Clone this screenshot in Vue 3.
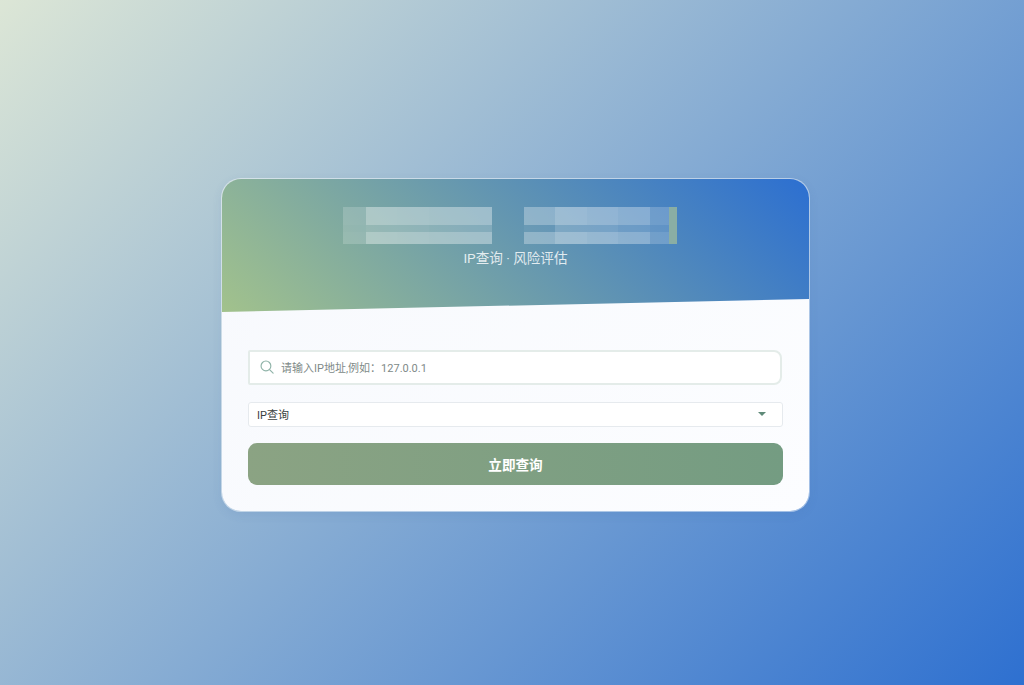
<script setup>
const alphaTop = { m1: 0.18, m2: 0.39, m3: 0.38, m4: 0.37, m5: 0.37, m6: 0.3, m7: 0.4, m8: 0.37, m9: 0.33, m10: 0.2 }
const alphaMid = { m1: 0.16, m2: 0.2, m3: 0.2, m4: 0.18, m5: 0.18, m6: 0.05, m7: 0.2, m8: 0.2, m9: 0.16, m10: 0.12 }
const names = ['m1', 'm2', 'm3', 'm4', 'm5', 'sp', 'm6', 'm7', 'm8', 'm9', 'm10', 'm11']
const rows = [
  { cls: 'band-a', alpha: alphaTop },
  { cls: 'band-b', alpha: alphaMid },
  { cls: 'band-c', alpha: alphaTop }
]
const tint = (a) => (a ? { background: `rgba(255,255,255,${a})` } : null)
</script>

<template>
  <main class="page">
    <section class="card">
      <header class="head">
        <div class="mosaic">
          <div v-for="row in rows" :key="row.cls" class="band" :class="row.cls">
            <span v-for="n in names" :key="n" class="cell" :class="n" :style="tint(row.alpha[n])"></span>
          </div>
        </div>
        <p class="sub">IP查询 · 风险评估</p>
      </header>
      <form class="body" @submit.prevent>
        <label class="search">
          <svg class="ico" width="14" height="14" viewBox="0 0 16 16" fill="none" stroke="#8fb3a8" stroke-width="1.3" stroke-linecap="round">
            <circle cx="6.8" cy="6.8" r="5.6" />
            <path d="M10.9 10.9 15 15" />
          </svg>
          <span class="ph">请输入IP地址,例如：127.0.0.1</span>
        </label>
        <div class="select">
          <span>IP查询</span>
          <i class="caret"></i>
        </div>
        <button class="go" type="button">立即查询</button>
      </form>
    </section>
  </main>
</template>

<style scoped>
.page {
  box-sizing: border-box;
  height: 685px;
  padding: 178px 0 0 221px;
  background: linear-gradient(135deg, #dce6d6 0%, #2e70d0 100%);
  font-family: Roboto, "Noto Sans CJK SC", sans-serif;
  overflow: hidden;
}
.card {
  box-sizing: border-box;
  width: 589px;
  height: 334px;
  border: 1px solid rgba(255, 255, 255, 0.45);
  border-radius: 20px;
  overflow: hidden;
  background: linear-gradient(135deg, #f7f9fd, #fcfdff) padding-box;
  box-shadow: 0 3px 10px rgba(60, 100, 170, 0.1);
}
.head {
  box-sizing: border-box;
  height: 133px;
  padding-top: 28px;
  background: linear-gradient(45deg, #a2c28c 0%, #2c6fd1 100%);
  clip-path: polygon(0 0, 100% 0, 100% 90.2%, 0 100%);
  text-align: center;
}
.mosaic {
  width: 335px;
  margin-left: 121px;
}
.band {
  display: flex;
}
.band-a { height: 18px; }
.band-b { height: 7px; }
.band-c { height: 12px; }
.cell { display: block; flex: none; }
.m1 { width: 23px; }
.m2 { width: 31px; }
.m3 { width: 32px; }
.m4 { width: 32px; }
.m5 { width: 31px; }
.sp { width: 32px; }
.m6 { width: 31px; }
.m7 { width: 32px; }
.m8 { width: 31px; }
.m9 { width: 32px; }
.m10 { width: 19px; }
.m11 { width: 8px; background: #8aaea4; }
.sub {
  margin: 4px 0 0;
  font-size: 13.6px;
  line-height: 20px;
  color: rgba(255, 255, 255, 0.82);
}
.body {
  display: flex;
  flex-direction: column;
  width: 535px;
  margin: 38px 0 0 26px;
}
.search {
  box-sizing: border-box;
  display: flex;
  align-items: center;
  gap: 7px;
  width: 534px;
  height: 35px;
  padding: 0 0 1px 10px;
  border: 2px solid #e4ece9;
  border-radius: 2px 8px 8px 2px;
  background: #fff;
}
.ico { flex: none; }
.ph {
  font-size: 11px;
  color: #808a88;
}
.select {
  box-sizing: border-box;
  display: flex;
  align-items: center;
  justify-content: space-between;
  height: 25px;
  margin-top: 17px;
  padding: 0 16px 2px 8px;
  border: 1px solid #e6eaee;
  border-radius: 3px;
  background: #fff;
  font-size: 11px;
  color: #3a3f3e;
}
.caret {
  width: 0;
  height: 0;
  border-left: 4px solid transparent;
  border-right: 4px solid transparent;
  border-top: 4px solid #5f8a78;
}
.go {
  height: 42px;
  margin-top: 16px;
  border: 0;
  border-radius: 9px;
  background: linear-gradient(90deg, #8ba383, #749c82);
  color: #fff;
  font: 700 13.6px Roboto, "Noto Sans CJK SC", sans-serif;
}
</style>
